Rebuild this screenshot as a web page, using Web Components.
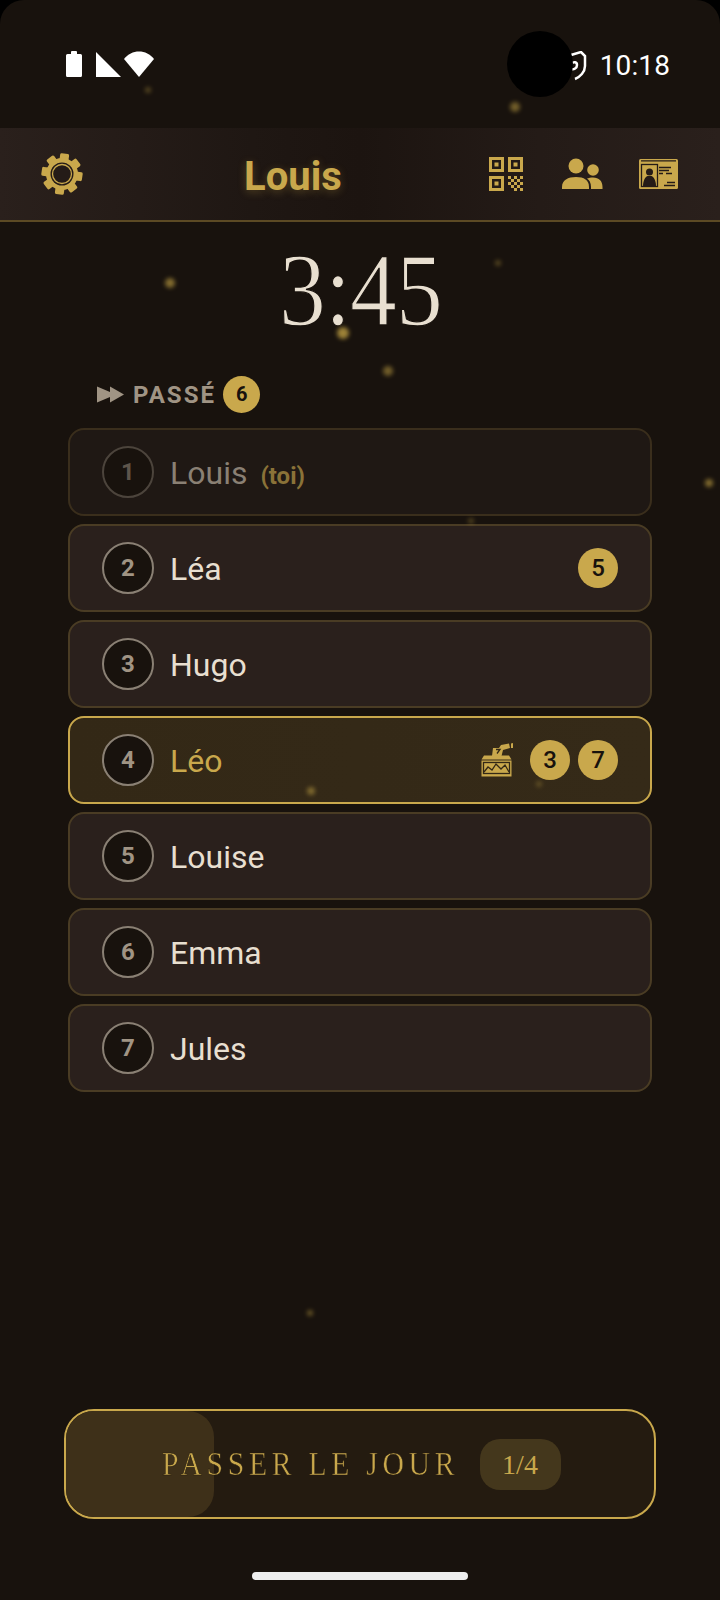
<!DOCTYPE html>
<html lang="fr"><head><meta charset="utf-8"><style>
html,body{margin:0;background:#000;}
</style></head><body>
<game-screen>
  <status-bar slot="status"></status-bar>
  <top-bar slot="top" name="Louis"></top-bar>
  <count-down slot="clock" time="3:45"></count-down>
  <section-label slot="label" text="PASSÉ" count="6"></section-label>
  <player-row num="1" name="Louis" you dim></player-row>
  <player-row num="2" name="Léa" badges="5"></player-row>
  <player-row num="3" name="Hugo"></player-row>
  <player-row num="4" name="Léo" badges="3,7" active vote></player-row>
  <player-row num="5" name="Louise"></player-row>
  <player-row num="6" name="Emma"></player-row>
  <player-row num="7" name="Jules"></player-row>
  <skip-button slot="action" text="PASSER LE JOUR" count="1/4"></skip-button>
</game-screen>
<script>
const GOLD='#c9a84c';
function def(name,css,html){
  customElements.define(name,class extends HTMLElement{
    connectedCallback(){
      if(this.shadowRoot)return;
      const r=this.attachShadow({mode:'open'});
      r.innerHTML='<style>'+css+'</style>'+(typeof html==='function'?html(this):html);
    }
  });
}
const dots=[[148,90,3,.35],[515,107,5,.5],[170,283,5,.6],[343,333,6,.75],[388,371,5,.5],[498,263,3,.35],[709,483,4,.6],[471,521,3,.3],[311,791,4,.5],[539,784,3,.3],[310,1313,3,.45]];
def('game-screen',`
:host{display:block;width:720px;height:1600px;position:relative;overflow:hidden;background:#18120d;border-radius:24px 24px 0 0;font-family:Roboto,sans-serif}
.wrap{display:flex;flex-direction:column;height:100%}
.list{display:flex;flex-direction:column;gap:8px;padding:0 68px}
.spacer{flex:1}
.dot{position:absolute;border-radius:50%;background:#c9a846;filter:blur(2px);pointer-events:none}
.foot{height:81px}
.foot i{display:block;width:216px;height:8px;margin:53px auto 0;background:#eee;border-radius:4px}
.cam{position:absolute;left:507px;top:31px;width:66px;height:66px;border-radius:50%;background:#000}
`,()=>`<div class="wrap"><slot name="status"></slot><slot name="top"></slot><slot name="clock"></slot><slot name="label"></slot><div class="list"><slot></slot></div><div class="spacer"></div><slot name="action"></slot><div class="foot"><i></i></div></div>
${dots.map(d=>`<div class="dot" style="left:${d[0]-d[2]}px;top:${d[1]-d[2]}px;width:${d[2]*2}px;height:${d[2]*2}px;opacity:${d[3]}"></div>`).join('')}<div class="cam"></div>`);

def('status-bar',`
:host{display:block;height:128px;color:#fff;font:400 28px Roboto,sans-serif}
.row{display:flex;align-items:center;height:128px;box-sizing:border-box;padding:0 50px 0 66px}
.sp{flex:1}
svg{display:block;fill:#fff}
.e{display:flex;align-items:center;padding-top:4px}
.t{margin-left:13px;line-height:1;letter-spacing:.1px}
`,`<div class="row"><svg width="90" height="28" viewBox="0 0 90 28"><path d="M0 5.500a1.500 1.500 0 0 1 1.500-1.500H5V2a1 1 0 0 1 1-1h4a1 1 0 0 1 1 1v2h3.500a1.500 1.500 0 0 1 1.500 1.500V25.500a1.500 1.500 0 0 1-1.500 1.500H1.500A1.500 1.500 0 0 1 0 25.500z"/><path d="M30 2 55 27H30z"/><path d="M58 9C62 4 67 1.500 73 1.500S84 4 88 9L73 27z"/></svg><div class="sp"></div><div class="e"><svg width="22" height="30" viewBox="0 0 22 30" style="fill:none;stroke:#fff;stroke-width:2.500"><path d="M6 4 16 1 20 5V15C20 21 15 26 10 28"/><path d="M6 13c3-3 6-2 6 1s-3 5-6 4"/></svg><div class="t">10:18</div></div></div>`);

def('top-bar',`
:host{display:flex;align-items:center;height:94px;box-sizing:border-box;border-bottom:2px solid #5c4a24;background:linear-gradient(90deg,#2a201c 0%,#1f1713 35%,#1c1410 50%,#241b17 75%,#2a201c 100%);position:relative}
.gear{margin-left:40px;width:44px;height:44px;flex:none;display:block}
h1{margin:0;position:absolute;left:237px;width:112px;top:29px;text-align:center;font:700 40px/1 Roboto,sans-serif;color:${GOLD};text-shadow:0 2px 8px rgba(201,166,70,.3)}
.r{margin-left:auto;display:flex;align-items:center;margin-right:42px}
svg{display:block}
`,h=>{
 const R=[];for(let i=0;i<8;i++){R.push(`<rect x="17.500" y="1.500" width="9" height="10" rx="1.500" transform="rotate(${i*45+8} 22 22)"/>`)}
 return `<svg class="gear" viewBox="0 0 44 44" fill="${GOLD}">${R.join('')}<circle cx="22" cy="22" r="16"/><circle cx="22" cy="22" r="11.500" fill="#241b17"/><circle cx="22" cy="22" r="9.500" fill="none" stroke="${GOLD}" stroke-width="1.300"/></svg>
 <h1>${h.getAttribute('name')}</h1>
 <div class="r">
 <svg width="34" height="34" viewBox="0 0 34 34" fill="${GOLD}" style="margin-right:38px"><path fill-rule="evenodd" d="M0 0h15v15H0zM3 3v9h9V3zM19 0h15v15H19zM22 3v9h9V3zM0 19h15v15H0zM3 22v9h9v-9z"/><path d="M5.500 5.500h4v4h-4zM24.500 5.500h4v4h-4zM5.500 24.500h4v4h-4zM19 19h3v3h-3zM25 19h3v3h-3zM31 19h3v3h-3zM22 22h3v3h-3zM28 22h3v3h-3zM19 25h3v3h-3zM25 25h3v3h-3zM31 25h3v3h-3zM22 28h3v3h-3zM28 28h3v3h-3zM25 31h3v3h-3zM31 31h3v3h-3z"/></svg>
 <svg width="42" height="32" viewBox="0 0 42 32" fill="${GOLD}" style="margin-right:36px"><circle cx="15" cy="8" r="7.500"/><circle cx="32" cy="12" r="5.800"/><path d="M1 31v-2c0-7 6-10 14-10s13 3 13 10v2z"/><path d="M30 31v-2c0-4-1.500-7-4-8.500 1.500-.5 4-1 6-1 6 0 9.500 3.500 9.500 9.500v2z"/></svg>
 <svg width="39" height="30" viewBox="0 0 39 30"><rect width="39" height="30" rx="1.500" fill="${GOLD}"/><path d="M2 1.800h35M20 8.500h12M20 11.500h10M20 14.500h4M27 14.500h6M28 23.500h8M25 26.500h11" stroke="#241b17" stroke-width="1.300" fill="none"/><rect x="2.500" y="5.500" width="16" height="22" fill="${GOLD}" stroke="#241b17" stroke-width="1.300"/><circle cx="10.500" cy="13" r="3.500" fill="#241b17"/><path d="M4 27c0-5 2-9 4.500-10h4c2.500 1 4.500 5 4.500 10z" fill="#241b17"/></svg>
 </div>`});

def('count-down',`
:host{display:flex;justify-content:center;align-items:flex-start;height:142px;box-sizing:border-box;color:#e8dfd0;font-family:"Liberation Serif",serif}
.t{font-size:104px;line-height:136px;letter-spacing:-1px;transform:scaleX(.9);-webkit-text-stroke:1.300px #18120d}
`,h=>`<div class="t">${h.getAttribute('time')}</div>`);

def('section-label',`
:host{display:flex;align-items:center;height:64px;box-sizing:border-box;padding:0 0 3px 97px}
svg{display:block;margin-right:9px}
span{font:700 24px Roboto,sans-serif;letter-spacing:2.100px;color:#a09484}
b{margin-left:7px;width:37px;height:37px;border-radius:50%;background:${GOLD};color:#18120d;font:700 20px/37px Roboto,sans-serif;text-align:center}
`,h=>`<svg width="27" height="18" viewBox="0 0 27 18" fill="#a09484"><path d="M0 .5 13 6V.5L27 8.500 13 16.500V11L0 16.500z"/></svg><span>${h.getAttribute('text')}</span><b>${h.getAttribute('count')}</b>`);

def('player-row',`
:host{display:block}
.r{display:flex;align-items:center;height:88px;box-sizing:border-box;padding:0 32px;border:2px solid #4a3c24;border-radius:16px;background:#2a201c;color:#e8dfd0}
.n{width:52px;height:52px;box-sizing:border-box;margin-right:16px;border:2px solid #8a8074;border-radius:50%;background:#18120d;color:#a09484;font:700 24px/48px Roboto,sans-serif;text-align:center;flex:none}
.name{font:400 32px/1 Roboto,sans-serif;padding-top:2px}
.toi{font:700 24px/1 Roboto,sans-serif;color:${GOLD};margin-left:13px;position:relative;top:4px}
.sp{flex:1}
.b{width:40px;height:40px;border-radius:50%;background:${GOLD};color:#18120d;font:500 24px/40px Roboto,sans-serif;text-align:center;margin-left:8px}
svg{display:block;margin-right:9px}
.dim{background:#1f1814;border-color:#3a2e1c}
.dim .name{color:#8a8074}.dim .toi{color:#8a7238}.dim .n{border-color:#4c443c;color:#5e554b}
.act{background:linear-gradient(90deg,#332816,#352a18);border-color:${GOLD}}
.act .name{color:${GOLD}}.act .n{color:#a09484}
`,h=>{
 const dim=h.hasAttribute('dim'),act=h.hasAttribute('active'),bs=(h.getAttribute('badges')||'').split(',').filter(Boolean);
 const vote=h.hasAttribute('vote')?`<svg width="32" height="34" viewBox="0 0 32 34"><path d="M11 13 12 5h6L20 2 28 .5 29 5 22 7 20.500 13z" fill="${GOLD}"/><path d="M30 .5 32 0v5h-2z" fill="${GOLD}"/><path d="M15 6.500h4l-3 4" fill="none" stroke="#332816" stroke-width="1.300"/><path d="M3 12.500H28L30.500 16.500H.5z" fill="${GOLD}"/><rect x=".5" y="17.500" width="30" height="16" fill="${GOLD}"/><rect x="2.500" y="19.500" width="26" height="11" fill="none" stroke="#332816" stroke-width="1.300"/><path d="M3 29 7 24 11 27 15 21 20 26 24 22 28 29" fill="none" stroke="#332816" stroke-width="1.300"/></svg>`:'';
 return `<div class="r ${dim?'dim':''} ${act?'act':''}"><div class="n">${h.getAttribute('num')}</div><div class="name">${h.getAttribute('name')}</div>${h.hasAttribute('you')?'<div class="toi">(toi)</div>':''}<div class="sp"></div>${vote}${bs.map(b=>`<div class="b">${b}</div>`).join('')}</div>`});

def('skip-button',`
:host{display:block;margin:0 64px}
.b{position:relative;height:110px;box-sizing:border-box;border:2px solid ${GOLD};border-radius:30px;background:#241b10;overflow:hidden;display:flex;align-items:center;justify-content:center;color:${GOLD}}
.fill{position:absolute;left:0;top:0;bottom:0;width:148px;background:#3e3019;border-radius:0 26px 26px 0}
.t{position:relative;font:400 33px/1 "Liberation Serif",serif;letter-spacing:5.200px;transform:scaleX(.9);transform-origin:left;width:297px;margin-left:2px;white-space:nowrap;-webkit-text-stroke:.5px #241b10}
.p{position:relative;margin-left:21px;width:81px;height:51px;border-radius:20px;background:#44371c;font:400 28px/51px "Liberation Serif",serif;text-align:center}
`,h=>`<div class="b"><div class="fill"></div><div class="t">${h.getAttribute('text')}</div><div class="p">${h.getAttribute('count')}</div></div>`);
</script>
</body></html>
